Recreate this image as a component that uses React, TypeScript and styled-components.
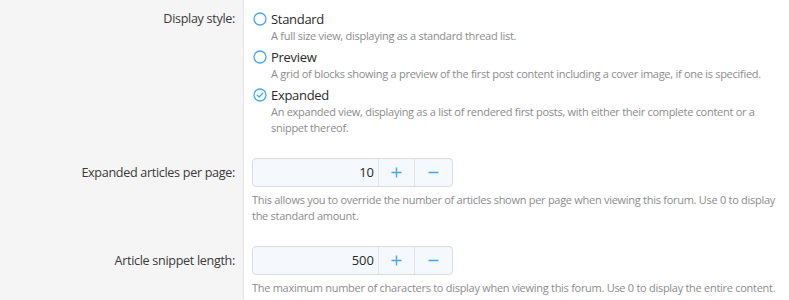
import React from "react";
import styled, { createGlobalStyle } from "styled-components";

const Global = createGlobalStyle`
  html, body { margin: 0; padding: 0; background: #ffffff; }
  body { font-family: "Open Sans", "Noto Sans", sans-serif; }
`;

const Form = styled.div`
  width: 789px;
  height: 300px;
  overflow: hidden;
  display: flex;
  flex-direction: column;
`;

const Row = styled.div<{ $fill?: boolean }>`
  display: grid;
  grid-template-columns: 244px 1fr;
  flex: ${(p) => (p.$fill ? 1 : "none")};
`;

const Label = styled.div<{ $input?: boolean }>`
  background: #f5f5f5;
  border-right: 1px solid #e6e6e6;
  text-align: right;
  padding: ${(p) => (p.$input ? "17px" : "10px")} 8px 10px 0;
  font-size: 12.6px;
  letter-spacing: -0.32px;
  line-height: 18px;
  color: #3a3a3a;
`;

const Control = styled.div<{ $first?: boolean }>`
  padding: ${(p) => (p.$first ? "10px" : "11px")} 8px 11px 8px;
`;

const OptionList = styled.div`
  display: flex;
  flex-direction: column;
  gap: 4px;
`;

const Option = styled.div`
  display: grid;
  grid-template-columns: 19px 1fr;
`;

const OptionLabel = styled.div`
  font-size: 13px;
  letter-spacing: -0.3px;
  line-height: 18px;
  color: #2a2a2a;
`;

const IconCell = styled.div`
  height: 18px;
  display: flex;
  align-items: center;
  padding-left: 1px;
`;

const Desc = styled.div`
  grid-column: 2;
  font-size: 11px;
  letter-spacing: -0.28px;
  line-height: 16px;
  color: #8c8c8c;
`;

const Spinner = styled.div`
  display: flex;
  width: 201px;
  height: 29px;
  box-sizing: border-box;
  border: 1px solid #dcdcdc;
  border-radius: 4px;
  background: #f5f9fd;
  overflow: hidden;
`;

const Value = styled.div`
  flex: 1;
  text-align: right;
  padding-right: 4px;
  font-size: 13px;
  line-height: 27px;
  color: #2a2a2a;
`;

const StepButton = styled.div<{ $w: number }>`
  box-sizing: border-box;
  width: ${(p) => p.$w}px;
  border-left: 1px solid #e3e3e3;
  display: flex;
  align-items: center;
  justify-content: center;
`;

const Help = styled.div`
  margin-top: 5px;
  font-size: 11px;
  letter-spacing: -0.28px;
  line-height: 16px;
  color: #8c8c8c;
`;

const RadioIcon = ({ checked }: { checked?: boolean }) => (
  <svg width="14" height="14" viewBox="0 0 14 14">
    <circle cx="7" cy="7" r="6" fill="none" stroke="#47a7eb" strokeWidth="1.3" />
    {checked && (
      <path d="M4.2 7.2 L6.1 9 L9.9 5.1" fill="none" stroke="#47a7eb" strokeWidth="1.3" strokeLinecap="round" strokeLinejoin="round" />
    )}
  </svg>
);

const PlusIcon = () => (
  <svg width="11" height="11" viewBox="0 0 11 11">
    <path d="M5.5 0.5 V10.5 M0.5 5.5 H10.5" stroke="#47a7eb" strokeWidth="1.4" />
  </svg>
);

const MinusIcon = () => (
  <svg width="11" height="11" viewBox="0 0 11 11">
    <path d="M0.5 5.5 H10.5" stroke="#47a7eb" strokeWidth="1.4" />
  </svg>
);

const options = [
  { label: "Standard", desc: "A full size view, displaying as a standard thread list." },
  { label: "Preview", desc: "A grid of blocks showing a preview of the first post content including a cover image, if one is specified." },
  { label: "Expanded", desc: "An expanded view, displaying as a list of rendered first posts, with either their complete content or a snippet thereof.", checked: true },
];

const NumberRow = ({ label, value, help }: { label: string; value: string; help: string }) => (
  <Row>
    <Label $input>{label}</Label>
    <Control>
      <Spinner>
        <Value>{value}</Value>
        <StepButton $w={36}><PlusIcon /></StepButton>
        <StepButton $w={38}><MinusIcon /></StepButton>
      </Spinner>
      <Help>{help}</Help>
    </Control>
  </Row>
);

export default function App() {
  return (
    <Form>
      <Global />
      <Row>
        <Label>Display style:</Label>
        <Control $first>
          <OptionList>
            {options.map((o) => (
              <Option key={o.label}>
                <IconCell><RadioIcon checked={o.checked} /></IconCell>
                <OptionLabel>{o.label}</OptionLabel>
                <Desc>{o.desc}</Desc>
              </Option>
            ))}
          </OptionList>
        </Control>
      </Row>
      <NumberRow
        label="Expanded articles per page:"
        value="10"
        help="This allows you to override the number of articles shown per page when viewing this forum. Use 0 to display the standard amount."
      />
      <NumberRow
        label="Article snippet length:"
        value="500"
        help="The maximum number of characters to display when viewing this forum. Use 0 to display the entire content."
      />
      <Row $fill>
        <Label />
        <Control />
      </Row>
    </Form>
  );
}
